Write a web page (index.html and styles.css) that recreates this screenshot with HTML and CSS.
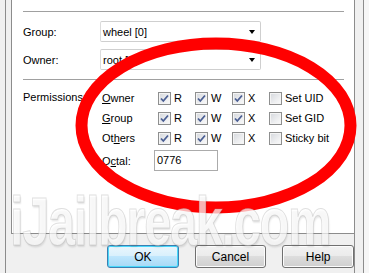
FILE: index.html
```html
<!DOCTYPE html>
<html>
	<head>
		<meta charset="UTF-8">
		<title>Properties - Permissions</title>
		<link rel="stylesheet" href="styles.css">
	</head>
	<body>
		<div class="frame">
			<div class="page">
				<div class="sep"></div>
				<div class="field">
					<span class="label">Group:</span>
					<div class="combo"><span>wheel [0]</span><i class="arrow"></i></div>
				</div>
				<div class="field">
					<span class="label">Owner:</span>
					<div class="combo"><span>root [0]</span><i class="arrow"></i></div>
				</div>
				<div class="sep sep-low"></div>

				<div class="perm">
					<span class="perm-title">Permissions:</span>

					<span class="who"><u>O</u>wner</span>
					<span class="check"><i class="box on"></i>R</span>
					<span class="check"><i class="box on"></i>W</span>
					<span class="check"><i class="box on"></i>X</span>
					<span class="check"><i class="box"></i>Set UID</span>

					<span class="who"><u>G</u>roup</span>
					<span class="check"><i class="box on"></i>R</span>
					<span class="check"><i class="box on"></i>W</span>
					<span class="check"><i class="box on"></i>X</span>
					<span class="check"><i class="box"></i>Set GID</span>

					<span class="who">Ot<u>h</u>ers</span>
					<span class="check"><i class="box on"></i>R</span>
					<span class="check"><i class="box on"></i>W</span>
					<span class="check"><i class="box"></i>X</span>
					<span class="check"><i class="box"></i>Sticky bit</span>

					<span class="who octal-label">O<u>c</u>tal:</span>
					<span class="octal">0776</span>
				</div>
			</div>

			<div class="buttons">
				<button class="default">OK</button>
				<button>Cancel</button>
				<button>Help</button>
			</div>
		</div>
		<div class="edge"></div>

		<!-- annotation drawn over the dialog -->
		<svg class="circle" width="369" height="273" viewBox="0 0 369 273">
			<ellipse cx="216" cy="125.5" rx="134.5" ry="82" fill="none" stroke="#ff0000" stroke-width="12"/>
		</svg>
		<div class="watermark">iJailbreak.com</div>

		<script>
		// checkmarks for the ticked boxes
		var tick = '<svg width="11" height="11" viewBox="0 0 11 11"><path d="M2 5.5 L4.3 8 L9 2.5" fill="none" stroke="#4b5f93" stroke-width="1.8"/></svg>';
		var boxes = document.querySelectorAll(".box.on");
		for (var i = 0; i < boxes.length; i++)
			boxes[i].innerHTML = tick;
		</script>
	</body>
</html>
```

FILE: styles.css
```css
html {
	background-color: #F0F0F0;
}
body {
	margin: 0;
	width: 369px;
	height: 273px;
	overflow: hidden;
	position: relative;
	display: flex;
	padding-left: 5px;
	box-sizing: border-box;
	font-family: "Liberation Sans", Arial, sans-serif;
	font-size: 11px;
	color: #000000;
}
.frame {
	width: 350px;
	height: 273px;
	box-sizing: border-box;
	border-left: 1px solid #8C8C8C;
	border-right: 1px solid #8C8C8C;
}
.edge {
	margin-left: 8px;
	width: 5px;
	border-left: 1px solid #8C8C8C;
	background-color: #F6F6F6;
}
.page {
	margin-left: 5px;
	height: 234px;
	box-sizing: border-box;
	background-color: #FFFFFF;
	border-left: 1px solid #8C8C8C;
	border-bottom: 1px solid #8C8C8C;
	padding: 11px 10px 0 11px;
}
.sep {
	height: 0;
	border-top: 1px solid #A0A0A0;
}
.sep-low {
	margin-top: 9px;
}
.field {
	display: flex;
	align-items: center;
	margin-top: 9px;
}
.field + .field {
	margin-top: 7px;
}
.label {
	width: 77px;
}
.combo {
	position: relative;
	width: 161px;
	height: 21px;
	box-sizing: border-box;
	border: 1px solid #CFCFCF;
	border-left-color: #DCDCDC;
	border-radius: 2px;
	padding-left: 2px;
	display: flex;
	align-items: center;
	justify-content: space-between;
	background-color: #FFFFFF;
}
.arrow {
	margin-right: 5px;
	width: 0;
	height: 0;
	border-left: 3.5px solid transparent;
	border-right: 3.5px solid transparent;
	border-top: 4px solid #000000;
}
.perm {
	margin-top: 8px;
	display: grid;
	grid-template-columns: 79px 52px 37px 37px 37px auto;
	grid-template-rows: 20px 20px 20px 23px;
	align-items: center;
}
.perm-title {
	grid-row: 1;
	grid-column: 1;
	margin-top: -2px;
}
.who {
	grid-column: 2;
}
.check {
	display: flex;
	align-items: center;
	padding-left: 4px;
	white-space: nowrap;
}
.box {
	width: 13px;
	height: 13px;
	box-sizing: border-box;
	margin-right: 3px;
	border: 1px solid #8E8F8F;
	background: linear-gradient(135deg, #D4D7DC 0%, #EDEEF0 60%, #FAFAFA 100%);
	box-shadow: inset 0 0 0 1px #F4F4F4;
	display: flex;
	align-items: center;
	justify-content: center;
}
.box svg {
	display: block;
}
.octal-label {
	align-self: end;
	padding-bottom: 4px;
}
.octal {
	grid-column: 3 / span 3;
	align-self: end;
	width: 64px;
	height: 21px;
	box-sizing: border-box;
	border: 1px solid #ABABAB;
	padding: 3px 2px;
	background-color: #FFFFFF;
}
.buttons {
	display: flex;
	gap: 16px;
	padding-left: 101px;
	margin-top: 11px;
}
button {
	width: 72px;
	height: 23px;
	border: 1px solid #707070;
	border-radius: 3px;
	background: linear-gradient(#F2F2F2 0%, #EBEBEB 48%, #DDDDDD 50%, #CFCFCF 100%);
	box-shadow: inset 0 0 0 1px #FCFCFC;
	font-family: "Liberation Sans", Arial, sans-serif;
	font-size: 12px;
	color: #000000;
	padding: 0;
}
button.default {
	border-color: #3C7FB1;
	background: linear-gradient(#EAF6FD 0%, #D9F0FC 48%, #BEE6FD 50%, #A7D9F5 100%);
	box-shadow: inset 0 0 0 1px #48D8FB;
}
.circle {
	position: absolute;
	left: 0;
	top: 0;
}
.watermark {
	position: absolute;
	left: 10px;
	top: 199px;
	font-family: "Liberation Sans", Arial, sans-serif;
	font-weight: bold;
	font-size: 68px;
	line-height: 44px;
	letter-spacing: -2px;
	white-space: nowrap;
	transform: scaleX(0.72);
	transform-origin: left top;
	color: rgba(255, 255, 255, 0.7);
	-webkit-text-stroke: 1px rgba(150, 150, 150, 0.3);
	text-shadow: 1px 2px 2px rgba(0, 0, 0, 0.1);
}
```
